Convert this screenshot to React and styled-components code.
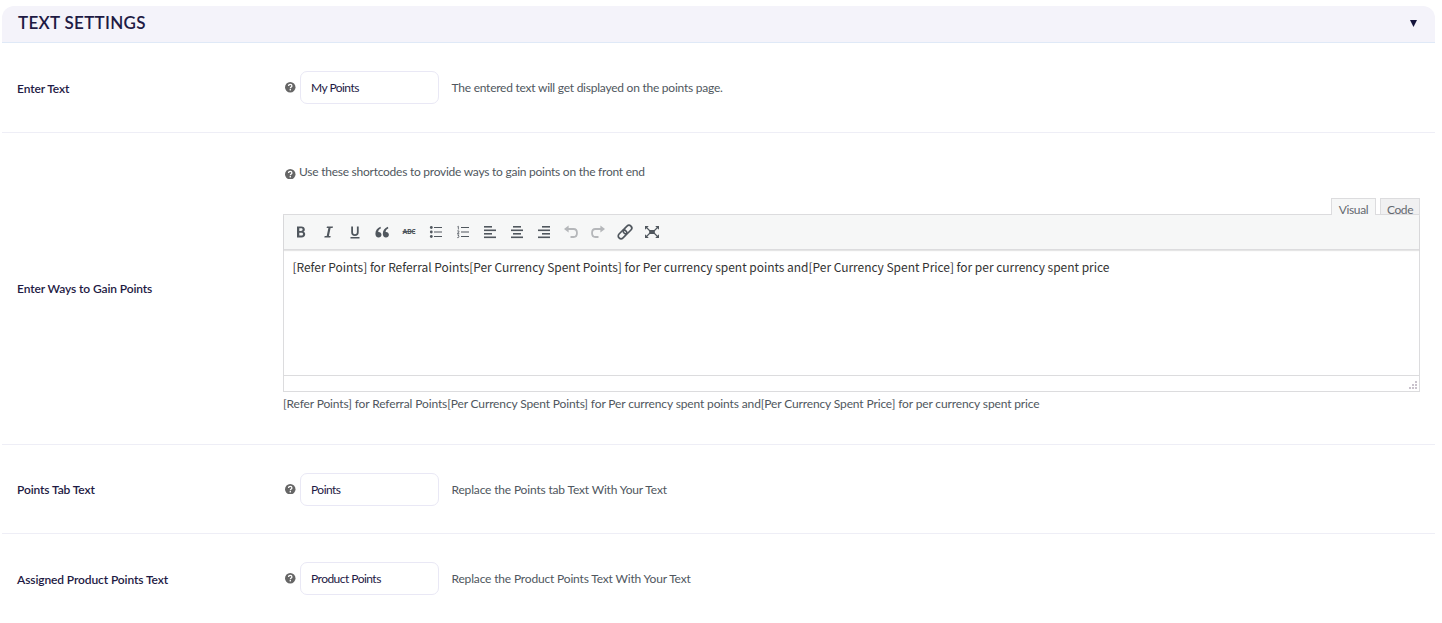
import React from "react";
import styled, { createGlobalStyle } from "styled-components";

const shortcodes =
  "[Refer Points] for Referral Points[Per Currency Spent Points] for Per currency spent points and[Per Currency Spent Price] for per currency spent price";

const HelpTip = () => (
  <HelpStyled viewBox="0 0 10 10">
    <circle cx="5" cy="5" r="5" fill="#666" />
    <path
      d="M3.4 3.9C3.4 2.8 4.1 2.3 5 2.3S6.6 2.9 6.6 3.7C6.6 4.7 5.1 4.8 5.1 5.9"
      fill="none"
      stroke="#fff"
      strokeWidth="1.2"
    />
    <rect x="4.4" y="6.7" width="1.3" height="1.3" fill="#fff" />
  </HelpStyled>
);

const lines = (rows) => rows.map(([x, y, w]) => <rect key={y} x={x} y={y} width={w} height="1.6" />);

const icons = [
  {
    name: "Bold",
    art: (
      <path
        fillRule="evenodd"
        d="M6 4.6v10.8h4.5c2.400 0 3.700-1.100 3.700-3.100 0-1.400-.8-2.200-1.900-2.500 1-.4 1.500-1.200 1.500-2.300 0-1.900-1.300-2.900-3.500-2.900zm2.300 1.700h1.700c1.100 0 1.600.5 1.600 1.300s-.5 1.400-1.600 1.400H8.300zm0 4.400h2c1.100 0 1.700.4 1.700 1.400s-.6 1.500-1.700 1.500h-2z"
      />
    ),
  },
  {
    name: "Italic",
    art: <path d="M9 4.500h6l-.4 1.500h-2l-1.700 8h1.800l-.4 1.500H6.300l.4-1.500h2l1.700-8H8.600z" />,
  },
  {
    name: "Underline",
    art: (
      <path d="M6.200 4.500H8v5.600c0 1.500.6 2.200 1.900 2.200s2-.7 2-2.200V4.500h1.800v5.700c0 2.500-1.400 3.700-3.800 3.700s-3.700-1.200-3.700-3.700zM5.500 15h9v1.400h-9z" />
    ),
  },
  {
    name: "Blockquote",
    art: (
      <path d="M9.500 12.700c0 1.600-1.200 2.800-2.900 2.800-2 0-3.200-1.500-3.200-3.800 0-3 1.800-5.700 5-6.900l.6 1.500c-1.700.9-2.700 2.100-2.800 3.600 1.900-.2 3.300 1 3.300 2.800zm7.400 0c0 1.600-1.200 2.800-2.900 2.800-2 0-3.200-1.500-3.200-3.800 0-3 1.800-5.700 5-6.900l.6 1.500c-1.700.9-2.700 2.100-2.800 3.600 1.900-.2 3.300 1 3.300 2.800z" />
    ),
  },
  { name: "Strikethrough", text: "ABC" },
  {
    name: "Bulleted list",
    art: (
      <>
        <circle cx="5.300" cy="5.500" r="1.400" />
        <circle cx="5.300" cy="10" r="1.400" />
        <circle cx="5.300" cy="14.500" r="1.400" />
        <path d="M8 5h8v1H8zM8 9.500h8v1H8zM8 14h8v1H8z" />
      </>
    ),
  },
  {
    name: "Numbered list",
    art: (
      <>
        <path d="M8 5h8v1H8zM8 9.500h8v1H8zM8 14h8v1H8z" />
        <path
          d="M4.400 4.800l1-.5v3.200M4.200 8.900h1.700v1.200L4.300 11.400h2M4.300 12.900H6l-.8 1.100c1.400.2 1.200 1.900-1 1.600"
          fill="none"
          stroke="currentColor"
          strokeWidth=".8"
        />
      </>
    ),
  },
  {
    name: "Align left",
    art: lines([[4, 4, 8], [4, 7.500, 12], [4, 11, 8], [4, 14.500, 12]]),
  },
  {
    name: "Align center",
    art: lines([[6, 4, 8], [4, 7.500, 12], [6, 11, 8], [4, 14.500, 12]]),
  },
  {
    name: "Align right",
    art: lines([[8, 4, 8], [4, 7.500, 12], [8, 11, 8], [4, 14.500, 12]]),
  },
  {
    name: "Undo",
    faded: true,
    art: (
      <>
        <path d="M3 7L7.600 3.500v7z" />
        <path d="M7 7h5.600c4.500 0 4.500 8 0 8H9.500" fill="none" stroke="currentColor" strokeWidth="1.800" />
      </>
    ),
  },
  {
    name: "Redo",
    faded: true,
    art: (
      <>
        <path d="M17 7l-4.600-3.500v7z" />
        <path d="M13 7H7.400c-4.500 0-4.500 8 0 8h3.100" fill="none" stroke="currentColor" strokeWidth="1.800" />
      </>
    ),
  },
  {
    name: "Link",
    art: (
      <g fill="none" stroke="currentColor" strokeWidth="1.700" transform="rotate(-45 10 10)">
        <rect x="1.600" y="7.200" width="9.800" height="5.600" rx="2.800" />
        <rect x="8.600" y="7.200" width="9.800" height="5.600" rx="2.800" />
      </g>
    ),
  },
  {
    name: "Fullscreen",
    art: (
      <>
        <path d="M7.200 8h5.600v4H7.200zM3 4h3.800L3 7.800zM17 4v3.800L13.200 4zM3 16v-3.800L6.800 16zM17 16h-3.800l3.800-3.800z" />
        <path d="M4 5l4 4M16 5l-4 4M4 15l4-4M16 15l-4-4" stroke="currentColor" strokeWidth="1.100" />
      </>
    ),
  },
];

const TextRow = ({ label, value, description, first }) => (
  <Row $height={first ? 90 : 89}>
    <Label>{label}</Label>
    <Field>
      <HelpTip />
      <Input defaultValue={value} />
      <Description $tight={first}>{description}</Description>
    </Field>
  </Row>
);

const Editor = () => (
  <EditorStyled>
    <div className="tabs">
      <Tab $active>Visual</Tab>
      <Tab>Code</Tab>
    </div>
    <div className="frame">
      <div className="toolbar">
        {icons.map(({ name, art, text, faded }) => (
          <ToolButton key={name} aria-label={name} $faded={faded}>
            {text ? <Strike>{text}</Strike> : <svg viewBox="0 0 20 20">{art}</svg>}
          </ToolButton>
        ))}
      </div>
      <div className="content">{shortcodes}</div>
      <div className="status">
        <svg viewBox="0 0 8 8">
          <path d="M6 0h2v2H6zM6 3h2v2H6zM3 3h2v2H3zM6 6h2v2H6zM3 6h2v2H3zM0 6h2v2H0z" />
        </svg>
      </div>
    </div>
  </EditorStyled>
);

function App() {
  return (
    <>
      <GlobalStyle />
      <Panel>
        <Header>
          <h2>TEXT SETTINGS</h2>
          <Arrow viewBox="0 0 8 8">
            <path d="M0 0h8L4 8z" />
          </Arrow>
        </Header>
        <TextRow
          first
          label="Enter Text"
          value="My Points"
          description="The entered text will get displayed on the points page."
        />
        <Row $height={312}>
          <Label $raised>Enter Ways to Gain Points</Label>
          <EditorField>
            <Hint>
              <HelpTip />
              <span>Use these shortcodes to provide ways to gain points on the front end</span>
            </Hint>
            <Editor />
            <Note>{shortcodes}</Note>
          </EditorField>
        </Row>
        <TextRow
          label="Points Tab Text"
          value="Points"
          description="Replace the Points tab Text With Your Text"
        />
        <TextRow
          label="Assigned Product Points Text"
          value="Product Points"
          description="Replace the Product Points Text With Your Text"
        />
      </Panel>
    </>
  );
}

const GlobalStyle = createGlobalStyle`
  * {
    box-sizing: border-box;
  }
  body {
    margin: 0;
    background: #fff;
    color: #3c434a;
    font-family: Lato, sans-serif;
    font-size: 12px;
    overflow: hidden;
  }
`;

const Panel = styled.section`
  width: 1433px;
  margin: 6px 0 0 2px;
`;

const Header = styled.header`
  display: flex;
  justify-content: space-between;
  height: 37px;
  padding: 0 18px 0 16px;
  background: #f4f3fa;
  border-bottom: 1px solid #dfe9f7;
  border-radius: 12px 12px 0 0;
  h2 {
    margin: 0;
    color: #1e1a44;
    font-size: 17px;
    font-weight: 600;
    letter-spacing: 0.3px;
    line-height: 34px;
  }
`;

const Arrow = styled.svg`
  width: 7px;
  height: 7px;
  margin-top: 14px;
  fill: #14143c;
`;

const Row = styled.div`
  display: flex;
  height: ${({ $height }) => $height}px;
  border-bottom: 1px solid #eeeef6;
  &:last-child {
    border-bottom: none;
  }
`;

const Label = styled.label`
  display: flex;
  align-items: center;
  width: 281px;
  padding: ${({ $raised }) => ($raised ? "0 0 1px 15px" : "1px 0 0 15px")};
  color: #1e1a44;
  font-weight: 600;
  letter-spacing: -0.11px;
`;

const Field = styled.div`
  display: flex;
  align-items: center;
  padding-left: 2px;
`;

const HelpStyled = styled.svg`
  flex: none;
  width: 10.5px;
  height: 10.5px;
`;

const Input = styled.input`
  width: 139px;
  height: 33px;
  margin: 0 12.5px 0 4.5px;
  padding: 0 10px;
  border: 1px solid #e9e8f5;
  border-radius: 7px;
  color: #1e1a44;
  font: inherit;
  letter-spacing: -0.53px;
  outline: none;
`;

const Description = styled.span`
  color: #50575e;
  letter-spacing: ${({ $tight }) => ($tight ? -0.24 : -0.17)}px;
`;

const EditorField = styled.div`
  width: 1137px;
  padding-top: 30px;
`;

const Hint = styled.div`
  display: flex;
  align-items: center;
  gap: 3.5px;
  height: 20px;
  padding-left: 2px;
  color: #50575e;
  letter-spacing: -0.25px;
  svg {
    margin-top: 2px;
  }
  span {
    margin-top: -3px;
  }
`;

const EditorStyled = styled.div`
  padding-top: 15px;
  .tabs {
    display: flex;
    justify-content: flex-end;
    gap: 4px;
    height: 16px;
  }
  .frame {
    border: 1px solid #dcdcde;
  }
  .toolbar {
    display: flex;
    align-items: center;
    height: 35px;
    padding: 0 0 1px 3.5px;
    background: #f6f7f7;
    border-bottom: 1px solid #dcdcde;
    box-shadow: 0 1px 1px rgba(0, 0, 0, 0.1);
  }
  .content {
    height: 125px;
    padding: 8px 8.5px;
    color: #333;
    font-family: "Noto Sans CJK JP", sans-serif;
    font-size: 12px;
    letter-spacing: -0.032px;
    line-height: 18px;
    white-space: nowrap;
  }
  .status {
    display: flex;
    justify-content: flex-end;
    align-items: flex-end;
    height: 16px;
    padding: 2px;
    border-top: 1px solid #dcdcde;
    svg {
      width: 8px;
      height: 8px;
      fill: #c9c2cc;
    }
  }
`;

const Tab = styled.div`
  position: relative;
  height: ${({ $active }) => ($active ? 17 : 16)}px;
  width: ${({ $active }) => ($active ? 45 : 40)}px;
  border: 1px solid #dcdcde;
  border-bottom: none;
  background: ${({ $active }) => ($active ? "#f6f7f7" : "#f0f0f1")};
  color: #646970;
  letter-spacing: -0.4px;
  line-height: 22px;
  text-align: center;
  z-index: 1;
`;

const ToolButton = styled.button`
  display: flex;
  align-items: center;
  justify-content: center;
  width: 26.97px;
  height: 28px;
  padding: 0;
  border: none;
  background: none;
  color: ${({ $faded }) => ($faded ? "#b5b7ba" : "#50575e")};
  svg {
    width: 20px;
    height: 20px;
    fill: currentColor;
  }
`;

const Strike = styled.s`
  font: bold 7px "Open Sans", sans-serif;
  letter-spacing: -0.5px;
`;

const Note = styled.p`
  margin: 4px 0 0;
  color: #50575e;
  letter-spacing: -0.132px;
  line-height: 15px;
  white-space: nowrap;
`;

export default App;
